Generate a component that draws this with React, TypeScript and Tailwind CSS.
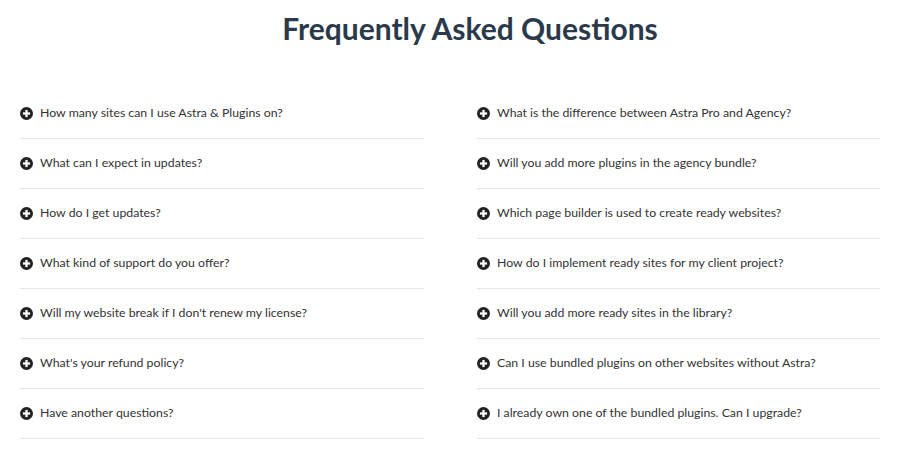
import React from 'react';

const left = [
  'How many sites can I use Astra & Plugins on?',
  'What can I expect in updates?',
  'How do I get updates?',
  'What kind of support do you offer?',
  "Will my website break if I don't renew my license?",
  "What's your refund policy?",
  'Have another questions?',
];

const right = [
  'What is the difference between Astra Pro and Agency?',
  'Will you add more plugins in the agency bundle?',
  'Which page builder is used to create ready websites?',
  'How do I implement ready sites for my client project?',
  'Will you add more ready sites in the library?',
  'Can I use bundled plugins on other websites without Astra?',
  'I already own one of the bundled plugins. Can I upgrade?',
];

const PlusCircle = () => (
  <svg viewBox="0 0 16 16" className="w-[13px] h-[13px] shrink-0">
    <circle cx="8" cy="8" r="8" fill="#222" />
    <rect x="6.6" y="3.6" width="2.8" height="8.8" fill="#fff" />
    <rect x="3.6" y="6.6" width="8.8" height="2.8" fill="#fff" />
  </svg>
);

const FaqColumn: React.FC<{ items: string[] }> = ({ items }) => (
  <div className="flex flex-col">
    {items.map((q) => (
      <div key={q} className="h-[50px] flex items-center gap-[7px] border-b border-[#e6e6e6]">
        <PlusCircle />
        <span className="text-[12.3px] text-[#333]">{q}</span>
      </div>
    ))}
  </div>
);

export default function App() {
  return (
    <div className="w-[900px] h-[465px] bg-white overflow-hidden font-['Lato',sans-serif]">
      <h2 className="pt-[9px] h-[89px] text-center text-[30px] leading-[38px] font-bold text-[#2b3a4a] pl-[40px]">
        Frequently Asked Questions
      </h2>
      <div className="grid grid-cols-[404px_403px] gap-x-[53px] px-5">
        <FaqColumn items={left} />
        <FaqColumn items={right} />
      </div>
    </div>
  );
}
